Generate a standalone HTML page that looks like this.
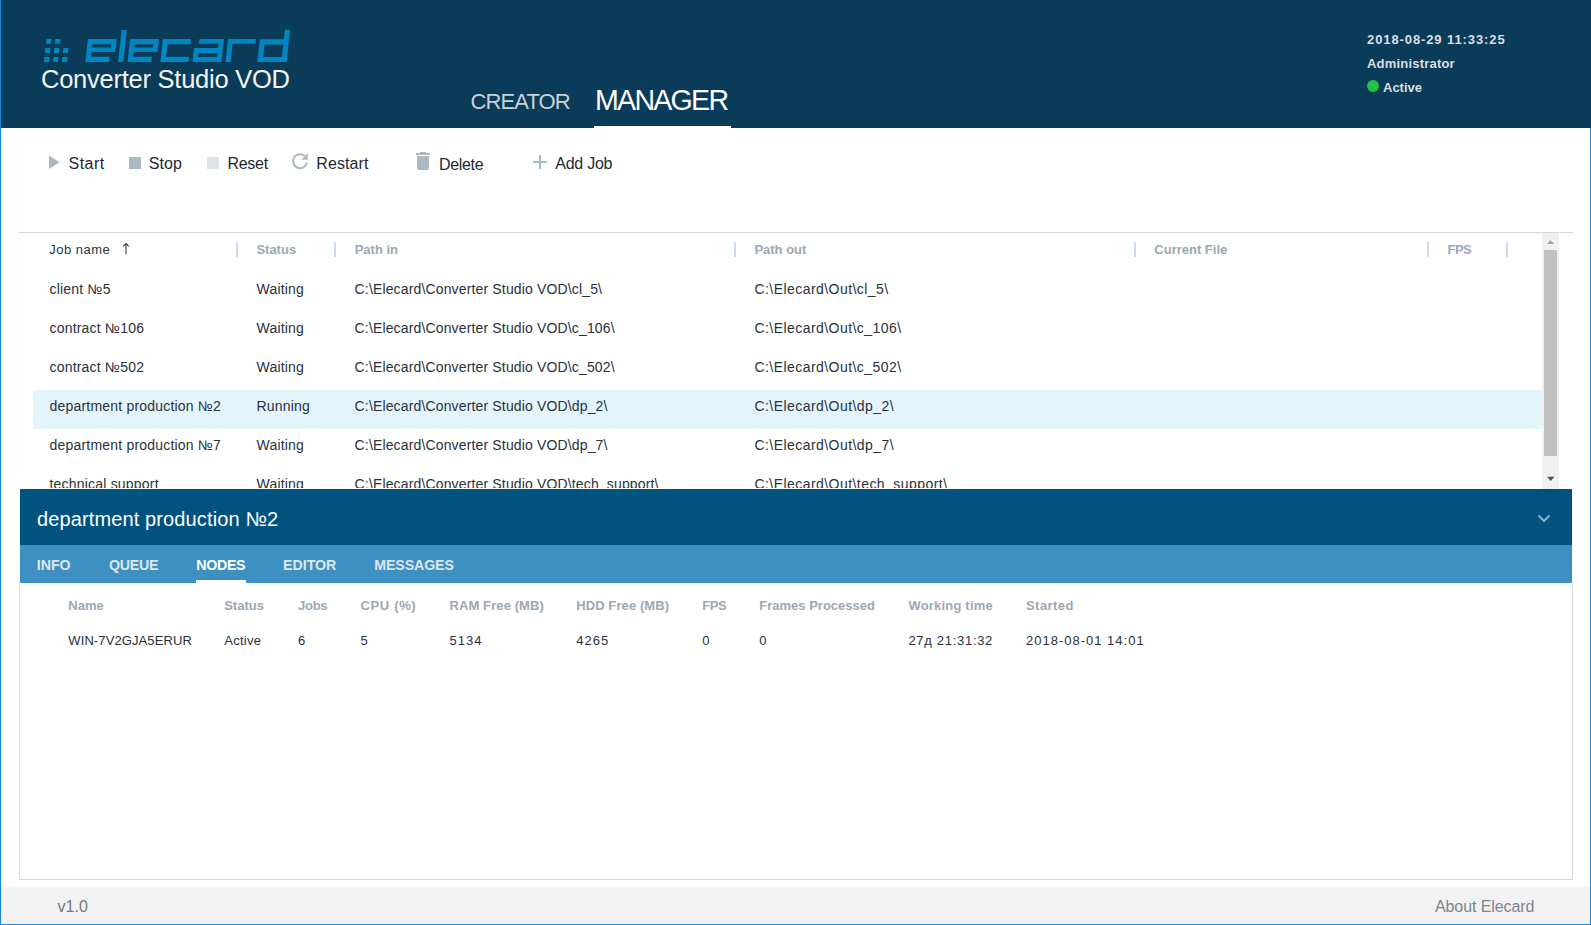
<!DOCTYPE html>
<html><head><meta charset="utf-8"><title>Elecard Converter Studio VOD</title>
<style>
html,body{margin:0;padding:0;width:1591px;height:925px;overflow:hidden;background:#fff;position:relative;font-family:"Liberation Sans",sans-serif}
.t{position:absolute;white-space:pre;line-height:1;font-family:"Liberation Sans",sans-serif}
</style></head><body>
<div style="position:absolute;left:0;top:0;width:1591px;height:128px;background:#0a3b59"></div>
<svg style="position:absolute;left:0;top:0" width="320" height="128"><g fill="#0087c1" transform="translate(0,62) skewX(-6.28) translate(0,-62)"><polygon points="43.8,43.8 49.0,43.8 49.0,38.9 43.8,38.9"/><polygon points="52.8,43.8 58.0,43.8 58.0,38.9 52.8,38.9"/><polygon points="43.8,53.0 49.0,53.0 49.0,48.1 43.8,48.1"/><polygon points="52.8,53.0 58.0,53.0 58.0,48.1 52.8,48.1"/><polygon points="61.8,53.0 67.0,53.0 67.0,48.1 61.8,48.1"/><polygon points="43.8,61.9 49.0,61.9 49.0,57.0 43.8,57.0"/><polygon points="52.8,61.9 58.0,61.9 58.0,57.0 52.8,57.0"/><polygon points="61.8,61.9 67.0,61.9 67.0,57.0 61.8,57.0"/><path fill-rule="evenodd" d="M85.3,62 L109.1,62 L109.1,56.7 L90.3,56.7 L90.3,52.1 L114.3,52.1 L114.3,39 L85.3,39 Z M90.3,44.2 L109.3,44.2 L109.3,47.6 L90.3,47.6 Z"/><polygon points="118.1,62 123.3,62 123.3,30 118.1,30"/><path fill-rule="evenodd" d="M127.5,62 L151.3,62 L151.3,56.7 L132.5,56.7 L132.5,52.1 L156.5,52.1 L156.5,39 L127.5,39 Z M132.5,44.2 L151.5,44.2 L151.5,47.6 L132.5,47.6 Z"/><polygon points="160.3,62 188.5,62 188.5,56.7 165.5,56.7 165.5,44.2 188.5,44.2 188.5,39 160.3,39"/><path fill-rule="evenodd" d="M192.5,62 L221.4,62 L221.4,39 L197,39 L197,43.8 L216.6,43.8 L216.6,48.1 L192.5,48.1 Z M197.5,53.3 L216.6,53.3 L216.6,57 L197.5,57 Z"/><polygon points="225.5,62 230.6,62 230.6,43.8 253.5,43.8 253.5,39 225.5,39"/><path fill-rule="evenodd" d="M257.4,62 L286.6,62 L286.6,29.8 L281.4,29.8 L281.4,39.2 L257.4,39.2 Z M262.6,44.4 L281.4,44.4 L281.4,57 L262.6,57 Z"/></g></svg>
<div class="t" style="left:41px;top:66.71px;font-size:25.5px;color:#f3f5f6;font-weight:400;letter-spacing:-0.25px;">Converter Studio VOD</div>
<div class="t" style="left:470.5px;top:91.38px;font-size:22px;color:#c9d1d8;font-weight:400;letter-spacing:-0.9px;">CREATOR</div>
<div class="t" style="left:595px;top:85.99px;font-size:28.6px;color:#ffffff;font-weight:400;letter-spacing:-1.75px;">MANAGER</div>
<div style="position:absolute;left:594px;top:126px;width:137px;height:2px;background:#fff"></div>
<div class="t" style="left:1367px;top:33.00px;font-size:13px;color:#dadfe3;font-weight:700;letter-spacing:0.9px;">2018-08-29 11:33:25</div>
<div class="t" style="left:1367px;top:57.00px;font-size:13px;color:#dadfe3;font-weight:700;letter-spacing:0.2px;">Administrator</div>
<div style="position:absolute;left:1367px;top:80px;width:12px;height:12px;border-radius:50%;background:#22c046"></div>
<div class="t" style="left:1383px;top:80.60px;font-size:13px;color:#dadfe3;font-weight:700;letter-spacing:0px;">Active</div>
<svg style="position:absolute;left:0;top:0" width="700" height="200"><polygon points="49,155.4 59.6,162.2 49,169" fill="#aab8c2"/><rect x="129" y="157" width="12" height="12" fill="#aab8c2"/><rect x="207" y="157" width="12" height="12" fill="#dde3e8"/><path d="M306.9,162.5 A7,7 0 1 1 304.6,155.9" fill="none" stroke="#aab8c2" stroke-width="2"/><polygon points="307.7,153 307.9,159.8 301.3,159.7" fill="#aab8c2"/><rect x="416" y="153" width="14" height="2" fill="#aab8c2"/><rect x="420" y="152" width="6" height="1.5" fill="#aab8c2"/><path d="M417,156 H429 V168 Q429,170 427,170 H419 Q417,170 417,168 Z" fill="#aab8c2"/><rect x="539" y="155" width="2" height="14" fill="#aab8c2"/><rect x="533" y="161" width="14" height="2" fill="#aab8c2"/></svg>
<div class="t" style="left:68.5px;top:155.86px;font-size:16px;color:#1e2933;font-weight:400;letter-spacing:0.5px;">Start</div>
<div class="t" style="left:148.7px;top:155.86px;font-size:16px;color:#1e2933;font-weight:400;letter-spacing:0.1px;">Stop</div>
<div class="t" style="left:227.5px;top:155.86px;font-size:16px;color:#1e2933;font-weight:400;letter-spacing:-0.3px;">Reset</div>
<div class="t" style="left:316.3px;top:155.86px;font-size:16px;color:#1e2933;font-weight:400;letter-spacing:0.1px;">Restart</div>
<div class="t" style="left:439.1px;top:156.86px;font-size:16px;color:#1e2933;font-weight:400;letter-spacing:-0.35px;">Delete</div>
<div class="t" style="left:555.3px;top:155.86px;font-size:16px;color:#1e2933;font-weight:400;letter-spacing:-0.25px;">Add Job</div>
<div style="position:absolute;left:19px;top:232px;width:1554px;height:1px;background:#cfd9df"></div>
<div style="position:absolute;left:33px;top:390px;width:1509px;height:39px;background:#e4f4fc"></div>
<div style="position:absolute;left:236px;top:242px;width:2px;height:15px;background:#cfdbea"></div>
<div style="position:absolute;left:334px;top:242px;width:2px;height:15px;background:#cfdbea"></div>
<div style="position:absolute;left:734px;top:242px;width:2px;height:15px;background:#cfdbea"></div>
<div style="position:absolute;left:1134px;top:242px;width:2px;height:15px;background:#cfdbea"></div>
<div style="position:absolute;left:1427px;top:242px;width:2px;height:15px;background:#cfdbea"></div>
<div style="position:absolute;left:1506px;top:242px;width:2px;height:15px;background:#cfdbea"></div>
<div class="t" style="left:49.2px;top:243.00px;font-size:13px;color:#2a3540;font-weight:400;letter-spacing:0.5px;">Job name</div>
<svg style="position:absolute;left:0;top:0" width="140" height="260"><path d="M126,243.6 V254 M123.3,246.4 L126,243.6 L128.7,246.4" stroke="#2a3540" stroke-width="1.05" fill="none"/></svg>
<div class="t" style="left:256.4px;top:243.00px;font-size:13px;color:#9ba8b4;font-weight:700;letter-spacing:0px;">Status</div>
<div class="t" style="left:354.7px;top:243.00px;font-size:13px;color:#9ba8b4;font-weight:700;letter-spacing:0px;">Path in</div>
<div class="t" style="left:754.4px;top:243.00px;font-size:13px;color:#9ba8b4;font-weight:700;letter-spacing:0px;">Path out</div>
<div class="t" style="left:1154.3px;top:243.00px;font-size:13px;color:#9ba8b4;font-weight:700;letter-spacing:0px;">Current File</div>
<div class="t" style="left:1447.5px;top:243.00px;font-size:13px;color:#9ba8b4;font-weight:700;letter-spacing:-0.5px;">FPS</div>
<div style="position:absolute;left:0;top:232px;width:1591px;height:256px;overflow:hidden"><div class="t" style="left:49.5px;top:49.65px;font-size:14px;color:#29313a;font-weight:400;letter-spacing:0.2px;">client №5</div><div class="t" style="left:256.5px;top:49.65px;font-size:14px;color:#29313a;font-weight:400;letter-spacing:0.2px;">Waiting</div><div class="t" style="left:354.6px;top:49.65px;font-size:14px;color:#29313a;font-weight:400;letter-spacing:0.15px;">C:\Elecard\Converter Studio VOD\cl_5\</div><div class="t" style="left:754.4px;top:49.65px;font-size:14px;color:#29313a;font-weight:400;letter-spacing:0.45px;">C:\Elecard\Out\cl_5\</div><div class="t" style="left:49.5px;top:88.65px;font-size:14px;color:#29313a;font-weight:400;letter-spacing:0.2px;">contract №106</div><div class="t" style="left:256.5px;top:88.65px;font-size:14px;color:#29313a;font-weight:400;letter-spacing:0.2px;">Waiting</div><div class="t" style="left:354.6px;top:88.65px;font-size:14px;color:#29313a;font-weight:400;letter-spacing:0.15px;">C:\Elecard\Converter Studio VOD\c_106\</div><div class="t" style="left:754.4px;top:88.65px;font-size:14px;color:#29313a;font-weight:400;letter-spacing:0.45px;">C:\Elecard\Out\c_106\</div><div class="t" style="left:49.5px;top:127.65px;font-size:14px;color:#29313a;font-weight:400;letter-spacing:0.2px;">contract №502</div><div class="t" style="left:256.5px;top:127.65px;font-size:14px;color:#29313a;font-weight:400;letter-spacing:0.2px;">Waiting</div><div class="t" style="left:354.6px;top:127.65px;font-size:14px;color:#29313a;font-weight:400;letter-spacing:0.15px;">C:\Elecard\Converter Studio VOD\c_502\</div><div class="t" style="left:754.4px;top:127.65px;font-size:14px;color:#29313a;font-weight:400;letter-spacing:0.45px;">C:\Elecard\Out\c_502\</div><div class="t" style="left:49.5px;top:166.65px;font-size:14px;color:#29313a;font-weight:400;letter-spacing:0.2px;">department production №2</div><div class="t" style="left:256.5px;top:166.65px;font-size:14px;color:#29313a;font-weight:400;letter-spacing:0.2px;">Running</div><div class="t" style="left:354.6px;top:166.65px;font-size:14px;color:#29313a;font-weight:400;letter-spacing:0.15px;">C:\Elecard\Converter Studio VOD\dp_2\</div><div class="t" style="left:754.4px;top:166.65px;font-size:14px;color:#29313a;font-weight:400;letter-spacing:0.45px;">C:\Elecard\Out\dp_2\</div><div class="t" style="left:49.5px;top:205.65px;font-size:14px;color:#29313a;font-weight:400;letter-spacing:0.2px;">department production №7</div><div class="t" style="left:256.5px;top:205.65px;font-size:14px;color:#29313a;font-weight:400;letter-spacing:0.2px;">Waiting</div><div class="t" style="left:354.6px;top:205.65px;font-size:14px;color:#29313a;font-weight:400;letter-spacing:0.15px;">C:\Elecard\Converter Studio VOD\dp_7\</div><div class="t" style="left:754.4px;top:205.65px;font-size:14px;color:#29313a;font-weight:400;letter-spacing:0.45px;">C:\Elecard\Out\dp_7\</div><div class="t" style="left:49.5px;top:244.65px;font-size:14px;color:#29313a;font-weight:400;letter-spacing:0.2px;">technical support</div><div class="t" style="left:256.5px;top:244.65px;font-size:14px;color:#29313a;font-weight:400;letter-spacing:0.2px;">Waiting</div><div class="t" style="left:354.6px;top:244.65px;font-size:14px;color:#29313a;font-weight:400;letter-spacing:0.15px;">C:\Elecard\Converter Studio VOD\tech_support\</div><div class="t" style="left:754.4px;top:244.65px;font-size:14px;color:#29313a;font-weight:400;letter-spacing:0.45px;">C:\Elecard\Out\tech_support\</div></div>
<div style="position:absolute;left:1542px;top:233px;width:17px;height:256px;background:#f0f0f0"></div>
<div style="position:absolute;left:1544px;top:250px;width:13px;height:206px;background:#c1c1c1"></div>
<svg style="position:absolute;left:1540px;top:230px" width="20" height="260"><polygon points="7,14 14,14 10.5,10" fill="#a3a3a3"/><polygon points="7,246.7 14.5,246.7 10.75,251" fill="#505050"/></svg>
<div style="position:absolute;left:19px;top:583px;width:1552px;height:296px;border:1px solid #d0d9e0;border-top:none"></div>
<div style="position:absolute;left:20px;top:489px;width:1552px;height:56px;background:#01527f"></div>
<div style="position:absolute;left:20px;top:545px;width:1552px;height:38px;background:#3e90c3"></div>
<div class="t" style="left:36.9px;top:508.87px;font-size:20px;color:#ffffff;font-weight:400;letter-spacing:0.13px;">department production №2</div>
<svg style="position:absolute;left:1530px;top:506px" width="30" height="30"><path d="M8.5,9.5 L14,15 L19.5,9.5" stroke="#80b2d2" stroke-width="2" fill="none"/></svg>
<div class="t" style="left:36.7px;top:557.98px;font-size:14.2px;color:#dce6ee;font-weight:700;letter-spacing:0px;">INFO</div>
<div class="t" style="left:109.1px;top:557.98px;font-size:14.2px;color:#dce6ee;font-weight:700;letter-spacing:-0.3px;">QUEUE</div>
<div class="t" style="left:196.3px;top:557.98px;font-size:14.2px;color:#ffffff;font-weight:700;letter-spacing:-0.3px;">NODES</div>
<div class="t" style="left:283px;top:557.98px;font-size:14.2px;color:#dce6ee;font-weight:700;letter-spacing:0px;">EDITOR</div>
<div class="t" style="left:374.2px;top:557.98px;font-size:14.2px;color:#dce6ee;font-weight:700;letter-spacing:-0.1px;">MESSAGES</div>
<div style="position:absolute;left:196px;top:580px;width:50px;height:3px;background:#fff"></div>
<div class="t" style="left:68.3px;top:599.00px;font-size:13px;color:#9ba8b4;font-weight:700;letter-spacing:0px;">Name</div>
<div class="t" style="left:224.2px;top:599.00px;font-size:13px;color:#9ba8b4;font-weight:700;letter-spacing:0px;">Status</div>
<div class="t" style="left:298.1px;top:599.00px;font-size:13px;color:#9ba8b4;font-weight:700;letter-spacing:-0.3px;">Jobs</div>
<div class="t" style="left:360.5px;top:599.00px;font-size:13px;color:#9ba8b4;font-weight:700;letter-spacing:0.65px;">CPU (%)</div>
<div class="t" style="left:449.5px;top:599.00px;font-size:13px;color:#9ba8b4;font-weight:700;letter-spacing:0.1px;">RAM Free (MB)</div>
<div class="t" style="left:576.2px;top:599.00px;font-size:13px;color:#9ba8b4;font-weight:700;letter-spacing:0.1px;">HDD Free (MB)</div>
<div class="t" style="left:702.2px;top:599.00px;font-size:13px;color:#9ba8b4;font-weight:700;letter-spacing:-0.45px;">FPS</div>
<div class="t" style="left:759.3px;top:599.00px;font-size:13px;color:#9ba8b4;font-weight:700;letter-spacing:0px;">Frames Processed</div>
<div class="t" style="left:908.4px;top:599.00px;font-size:13px;color:#9ba8b4;font-weight:700;letter-spacing:0.2px;">Working time</div>
<div class="t" style="left:1026px;top:599.00px;font-size:13px;color:#9ba8b4;font-weight:700;letter-spacing:0.45px;">Started</div>
<div class="t" style="left:68.3px;top:634.00px;font-size:13px;color:#29313a;font-weight:400;letter-spacing:0.1px;">WIN-7V2GJA5ERUR</div>
<div class="t" style="left:224.2px;top:634.00px;font-size:13px;color:#29313a;font-weight:400;letter-spacing:0.3px;">Active</div>
<div class="t" style="left:298.1px;top:634.00px;font-size:13px;color:#29313a;font-weight:400;letter-spacing:0px;">6</div>
<div class="t" style="left:360.5px;top:634.00px;font-size:13px;color:#29313a;font-weight:400;letter-spacing:0px;">5</div>
<div class="t" style="left:449.5px;top:634.00px;font-size:13px;color:#29313a;font-weight:400;letter-spacing:1.0px;">5134</div>
<div class="t" style="left:576.2px;top:634.00px;font-size:13px;color:#29313a;font-weight:400;letter-spacing:1.0px;">4265</div>
<div class="t" style="left:702.2px;top:634.00px;font-size:13px;color:#29313a;font-weight:400;letter-spacing:0px;">0</div>
<div class="t" style="left:759.3px;top:634.00px;font-size:13px;color:#29313a;font-weight:400;letter-spacing:0px;">0</div>
<div class="t" style="left:908.4px;top:634.00px;font-size:13px;color:#29313a;font-weight:400;letter-spacing:0.7px;">27д 21:31:32</div>
<div class="t" style="left:1026px;top:634.00px;font-size:13px;color:#29313a;font-weight:400;letter-spacing:1.0px;">2018-08-01 14:01</div>
<div style="position:absolute;left:1px;top:887px;width:1589px;height:37px;background:#f2f2f2"></div>
<div class="t" style="left:57.5px;top:898.76px;font-size:16px;color:#6f7a84;font-weight:400;letter-spacing:0.05px;">v1.0</div>
<div class="t" style="left:1435px;top:899.46px;font-size:16px;color:#7a858f;font-weight:400;letter-spacing:-0.1px;">About Elecard</div>
<div style="position:absolute;left:0;top:0;width:1px;height:925px;background:#1a88df"></div>
<div style="position:absolute;left:1590px;top:128px;width:1px;height:797px;background:#1a88df"></div>
<div style="position:absolute;left:0;top:924px;width:1591px;height:1px;background:#1a88df"></div>
</body></html>
